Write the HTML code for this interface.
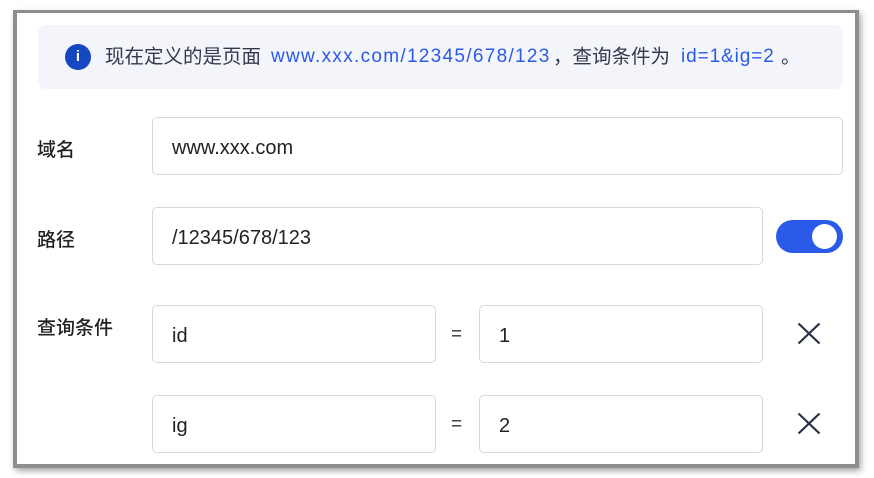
<!DOCTYPE html><html><head><style>
body{margin:0;width:874px;height:478px;background:#fff;position:relative;overflow:hidden;font-family:"Liberation Sans","Noto Sans CJK SC",sans-serif;}
.frame{position:absolute;left:13px;top:10px;width:846px;height:458px;border:4px solid #8e8e8e;border-top-width:3px;background:#fff;box-shadow:2px 3px 6px rgba(0,0,0,.35);box-sizing:border-box}
.a{position:absolute;white-space:nowrap}
.alert{left:38px;top:25px;width:805px;height:64px;background:#f3f5fb;border-radius:8px}
.ic{left:65px;top:44px;width:26px;height:26px;border-radius:50%;background:#1447c0;color:#fff;font-size:15px;text-align:center;line-height:26px;font-weight:bold}
.at{top:45px;font-size:19.5px;color:#333a4d;line-height:24px}
.lk{top:45px;font-size:19px;color:#2b5ae8;line-height:24px;letter-spacing:1.3px}
.lab{font-size:19px;color:#222;font-weight:500;left:37px}
.in{border:1px solid #d6d8dd;border-radius:5px;box-sizing:border-box;font-size:20px;color:#222;padding-left:19px;line-height:60px;height:58px}
</style></head><body>
<div class="frame"></div>
<div class="a alert"></div>
<div class="a ic">i</div>
<div class="a at" style="left:105px">现在定义的是页面</div>
<div class="a lk" style="left:271px">www.xxx.com/12345/678/123</div>
<div class="a at" style="left:553px">，查询条件为</div>
<div class="a lk" style="left:681px;letter-spacing:0.9px">id=1&amp;ig=2</div>
<div class="a at" style="left:781px">。</div>
<div class="a lab" style="top:135px">域名</div>
<div class="a in" style="left:152px;top:117px;width:691px">www.xxx.com</div>
<div class="a lab" style="top:225px">路径</div>
<div class="a in" style="left:152px;top:207px;width:611px">/12345/678/123</div>
<div class="a" style="left:776px;top:220px;width:67px;height:33px;border-radius:17px;background:#2b5ae8"></div>
<div class="a" style="left:812px;top:224px;width:25px;height:25px;border-radius:50%;background:#fff"></div>
<div class="a lab" style="top:313px">查询条件</div>
<div class="a in" style="left:152px;top:305px;width:284px">id</div>
<div class="a" style="left:451px;top:324px;font-size:19px;color:#333">=</div>
<div class="a in" style="left:479px;top:305px;width:284px">1</div>
<svg class="a" style="left:797px;top:322px" width="24" height="23"><path d="M1.5 1.5L22.5 21.5M22.5 1.5L1.5 21.5" stroke="#2a3045" stroke-width="2.2" fill="none"/></svg>
<div class="a in" style="left:152px;top:395px;width:284px">ig</div>
<div class="a" style="left:451px;top:414px;font-size:19px;color:#333">=</div>
<div class="a in" style="left:479px;top:395px;width:284px">2</div>
<svg class="a" style="left:797px;top:412px" width="24" height="23"><path d="M1.5 1.5L22.5 21.5M22.5 1.5L1.5 21.5" stroke="#2a3045" stroke-width="2.2" fill="none"/></svg>
</body></html>
